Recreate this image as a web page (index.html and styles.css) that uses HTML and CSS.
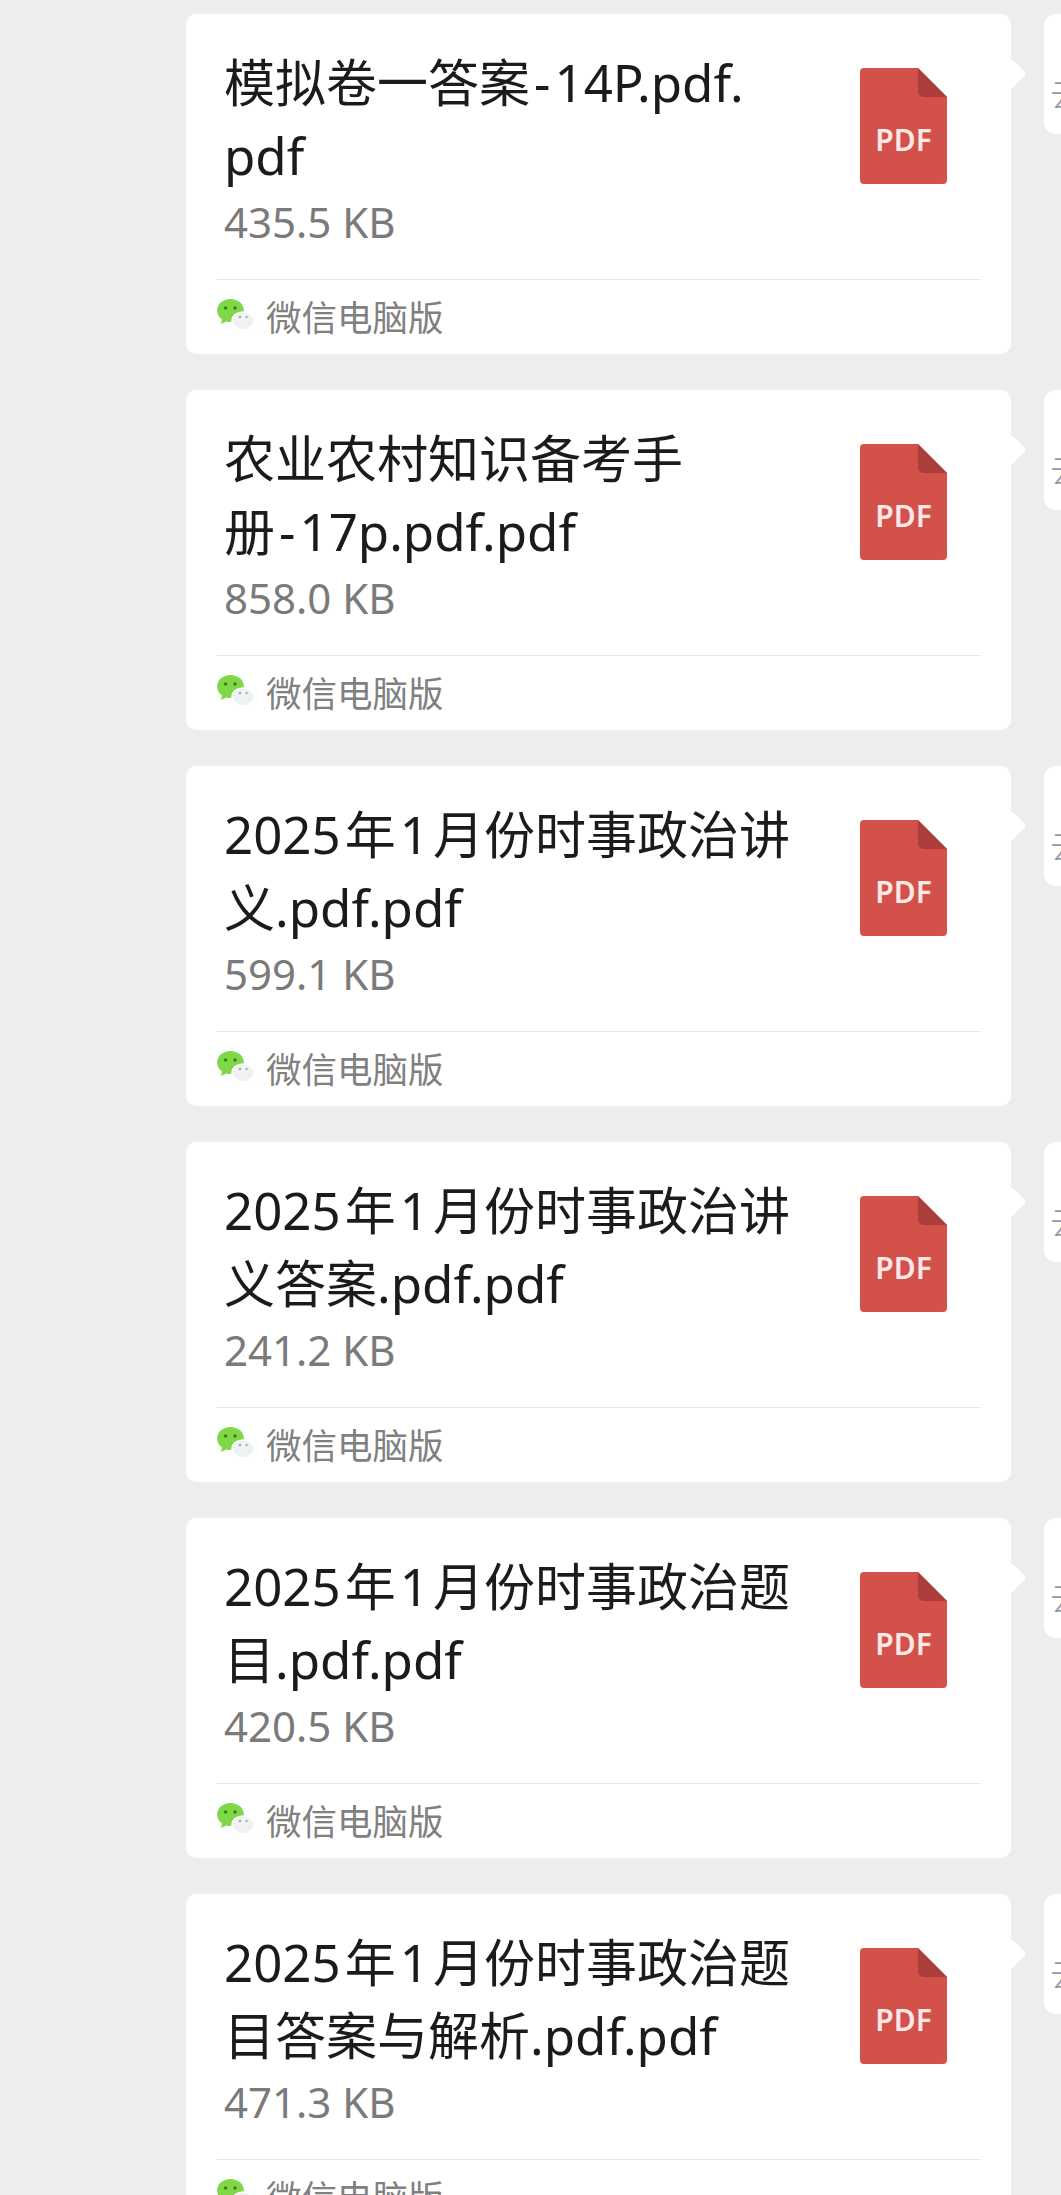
FILE: index.html
```html
<!DOCTYPE html>
<html lang="zh-CN">

<head>
    <meta charset="UTF-8">
    <title>文件消息</title>
    <link rel="stylesheet" href="styles.css">
</head>

<body>

    <svg class="defs" width="0" height="0">
        <symbol id="pdf" viewBox="0 0 87 116">
            <path d="M4 0H58L87 29V112a4 4 0 0 1-4 4H4a4 4 0 0 1-4-4V4a4 4 0 0 1 4-4Z" fill="#d4504a"/>
            <path d="M58 0L87 29H64a6 6 0 0 1-6-6Z" fill="#ab3f3b"/>
        </symbol>
        <symbol id="wx" viewBox="0 0 37 33">
            <path d="M13.5 0C6 0 0 5 0 11.5c0 3.800 2 6.800 5 9l-1 4.500 5.500-2.600c1.300.4 2.700.6 4 .6 7.500 0 13.500-5 13.500-11.500S21 0 13.500 0Z" fill="#80d848"/>
            <circle cx="8.600" cy="9" r="1.700" fill="#3f7a22"/>
            <circle cx="18" cy="9" r="1.700" fill="#3f7a22"/>
            <path d="M26 13c-6 0-11 4-11 8.800s5 8.800 11 8.800c1 0 2-.1 3-.4l4.500 2.300-1-3.800c2.800-1.600 4.500-4 4.500-6.900C37 17 32 13 26 13Z" fill="#eff2f2" stroke="#fff" stroke-width="1.500"/>
            <circle cx="23" cy="18" r="1.300" fill="#a8b2b4"/>
            <circle cx="29.600" cy="18" r="1.300" fill="#a8b2b4"/>
        </symbol>
    </svg>

    <div class="chat">

        <div class="row">
            <div class="card">
                <div class="card-main">
                    <div class="file-info">
                        <div class="file-name">模拟卷一答案<span class="dash">-</span>14P.pdf.<br>pdf</div>
                        <div class="file-size">435.5 KB</div>
                    </div>
                    <div class="file-icon"><svg><use href="#pdf"/></svg><span>PDF</span></div>
                </div>
                <div class="card-foot"><svg class="wx"><use href="#wx"/></svg>微信电脑版</div>
            </div>
            <div class="next"><span class="next-glyph">去</span></div>
        </div>

        <div class="row">
            <div class="card">
                <div class="card-main">
                    <div class="file-info">
                        <div class="file-name">农业农村知识备考手<br>册<span class="dash">-</span>17p.pdf.pdf</div>
                        <div class="file-size">858.0 KB</div>
                    </div>
                    <div class="file-icon"><svg><use href="#pdf"/></svg><span>PDF</span></div>
                </div>
                <div class="card-foot"><svg class="wx"><use href="#wx"/></svg>微信电脑版</div>
            </div>
            <div class="next"><span class="next-glyph">去</span></div>
        </div>

        <div class="row">
            <div class="card">
                <div class="card-main">
                    <div class="file-info">
                        <div class="file-name"><span class="year">2025</span>年<span class="dash">1</span>月份时事政治讲<br>义.pdf.pdf</div>
                        <div class="file-size">599.1 KB</div>
                    </div>
                    <div class="file-icon"><svg><use href="#pdf"/></svg><span>PDF</span></div>
                </div>
                <div class="card-foot"><svg class="wx"><use href="#wx"/></svg>微信电脑版</div>
            </div>
            <div class="next"><span class="next-glyph">去</span></div>
        </div>

        <div class="row">
            <div class="card">
                <div class="card-main">
                    <div class="file-info">
                        <div class="file-name"><span class="year">2025</span>年<span class="dash">1</span>月份时事政治讲<br>义答案.pdf.pdf</div>
                        <div class="file-size">241.2 KB</div>
                    </div>
                    <div class="file-icon"><svg><use href="#pdf"/></svg><span>PDF</span></div>
                </div>
                <div class="card-foot"><svg class="wx"><use href="#wx"/></svg>微信电脑版</div>
            </div>
            <div class="next"><span class="next-glyph">去</span></div>
        </div>

        <div class="row">
            <div class="card">
                <div class="card-main">
                    <div class="file-info">
                        <div class="file-name"><span class="year">2025</span>年<span class="dash">1</span>月份时事政治题<br>目.pdf.pdf</div>
                        <div class="file-size">420.5 KB</div>
                    </div>
                    <div class="file-icon"><svg><use href="#pdf"/></svg><span>PDF</span></div>
                </div>
                <div class="card-foot"><svg class="wx"><use href="#wx"/></svg>微信电脑版</div>
            </div>
            <div class="next"><span class="next-glyph">去</span></div>
        </div>

        <div class="row">
            <div class="card">
                <div class="card-main">
                    <div class="file-info">
                        <div class="file-name"><span class="year">2025</span>年<span class="dash">1</span>月份时事政治题<br>目答案与解析.pdf.pdf</div>
                        <div class="file-size">471.3 KB</div>
                    </div>
                    <div class="file-icon"><svg><use href="#pdf"/></svg><span>PDF</span></div>
                </div>
                <div class="card-foot"><svg class="wx"><use href="#wx"/></svg>微信电脑版</div>
            </div>
            <div class="next"><span class="next-glyph">去</span></div>
        </div>

    </div>

</body>

</html>
```

FILE: styles.css
```css
/* General Styling */
html, body {
    margin: 0;
    padding: 0;
    height: 2195px;
    overflow: hidden;
}

body {
    background-color: #ededed;
    font-family: "Noto Sans", "Noto Sans CJK SC", sans-serif;
}

.defs {
    display: block;
}

/* Message List */
.chat {
    display: flex;
    flex-direction: column;
    gap: 36px;
    padding: 14px 0 0 186px;
}

.row {
    display: flex;
    gap: 33px;
}

/* File Card */
.card {
    position: relative;
    flex: none;
    box-sizing: border-box;
    width: 825px;
    height: 340px;
    padding: 0 30px 0 31px;
    background-color: #fff;
    border-radius: 10px;
}

/* Bubble Tail */
.card::after {
    content: "";
    position: absolute;
    top: 49px;
    right: -11px;
    width: 22px;
    height: 22px;
    background-color: #fff;
    border-radius: 4px;
    transform: rotate(45deg);
}

.card-main {
    display: flex;
    justify-content: space-between;
    height: 265px;
}

.file-name {
    margin-top: 32px;
    margin-left: 7px;
    font-size: 51px;
    line-height: 73px;
    color: #1b1b1b;
}

.dash {
    margin: 0 4px;
}

.year {
    margin-right: 4px;
}

.file-size {
    margin-top: 6px;
    margin-left: 7px;
    font-size: 42px;
    line-height: 48px;
    color: #7a7a7a;
}

/* PDF Icon */
.file-icon {
    position: relative;
    width: 87px;
    height: 116px;
    margin: 54px 34px 0 0;
}

.file-icon svg {
    display: block;
    width: 87px;
    height: 116px;
}

.file-icon span {
    position: absolute;
    left: 0;
    right: 0;
    top: 55px;
    text-align: center;
    font-size: 30px;
    line-height: 34px;
    font-weight: 600;
    color: #fbe9e7;
}

/* Card Footer */
.card-foot {
    display: flex;
    align-items: center;
    gap: 12px;
    box-sizing: border-box;
    height: 75px;
    padding-bottom: 3px;
    border-top: 1px solid #e6e6e6;
    font-size: 35.5px;
    color: #808080;
}

.wx {
    width: 37px;
    height: 33px;
}

/* Next Column */
.next {
    flex: 1;
    height: 120px;
    background-color: #fff;
    border-radius: 12px 0 0 12px;
    overflow: hidden;
}

.next-glyph {
    display: block;
    margin: 58px 0 0 6px;
    font-size: 36px;
    line-height: 44px;
    font-weight: 300;
    color: #999;
}
```
